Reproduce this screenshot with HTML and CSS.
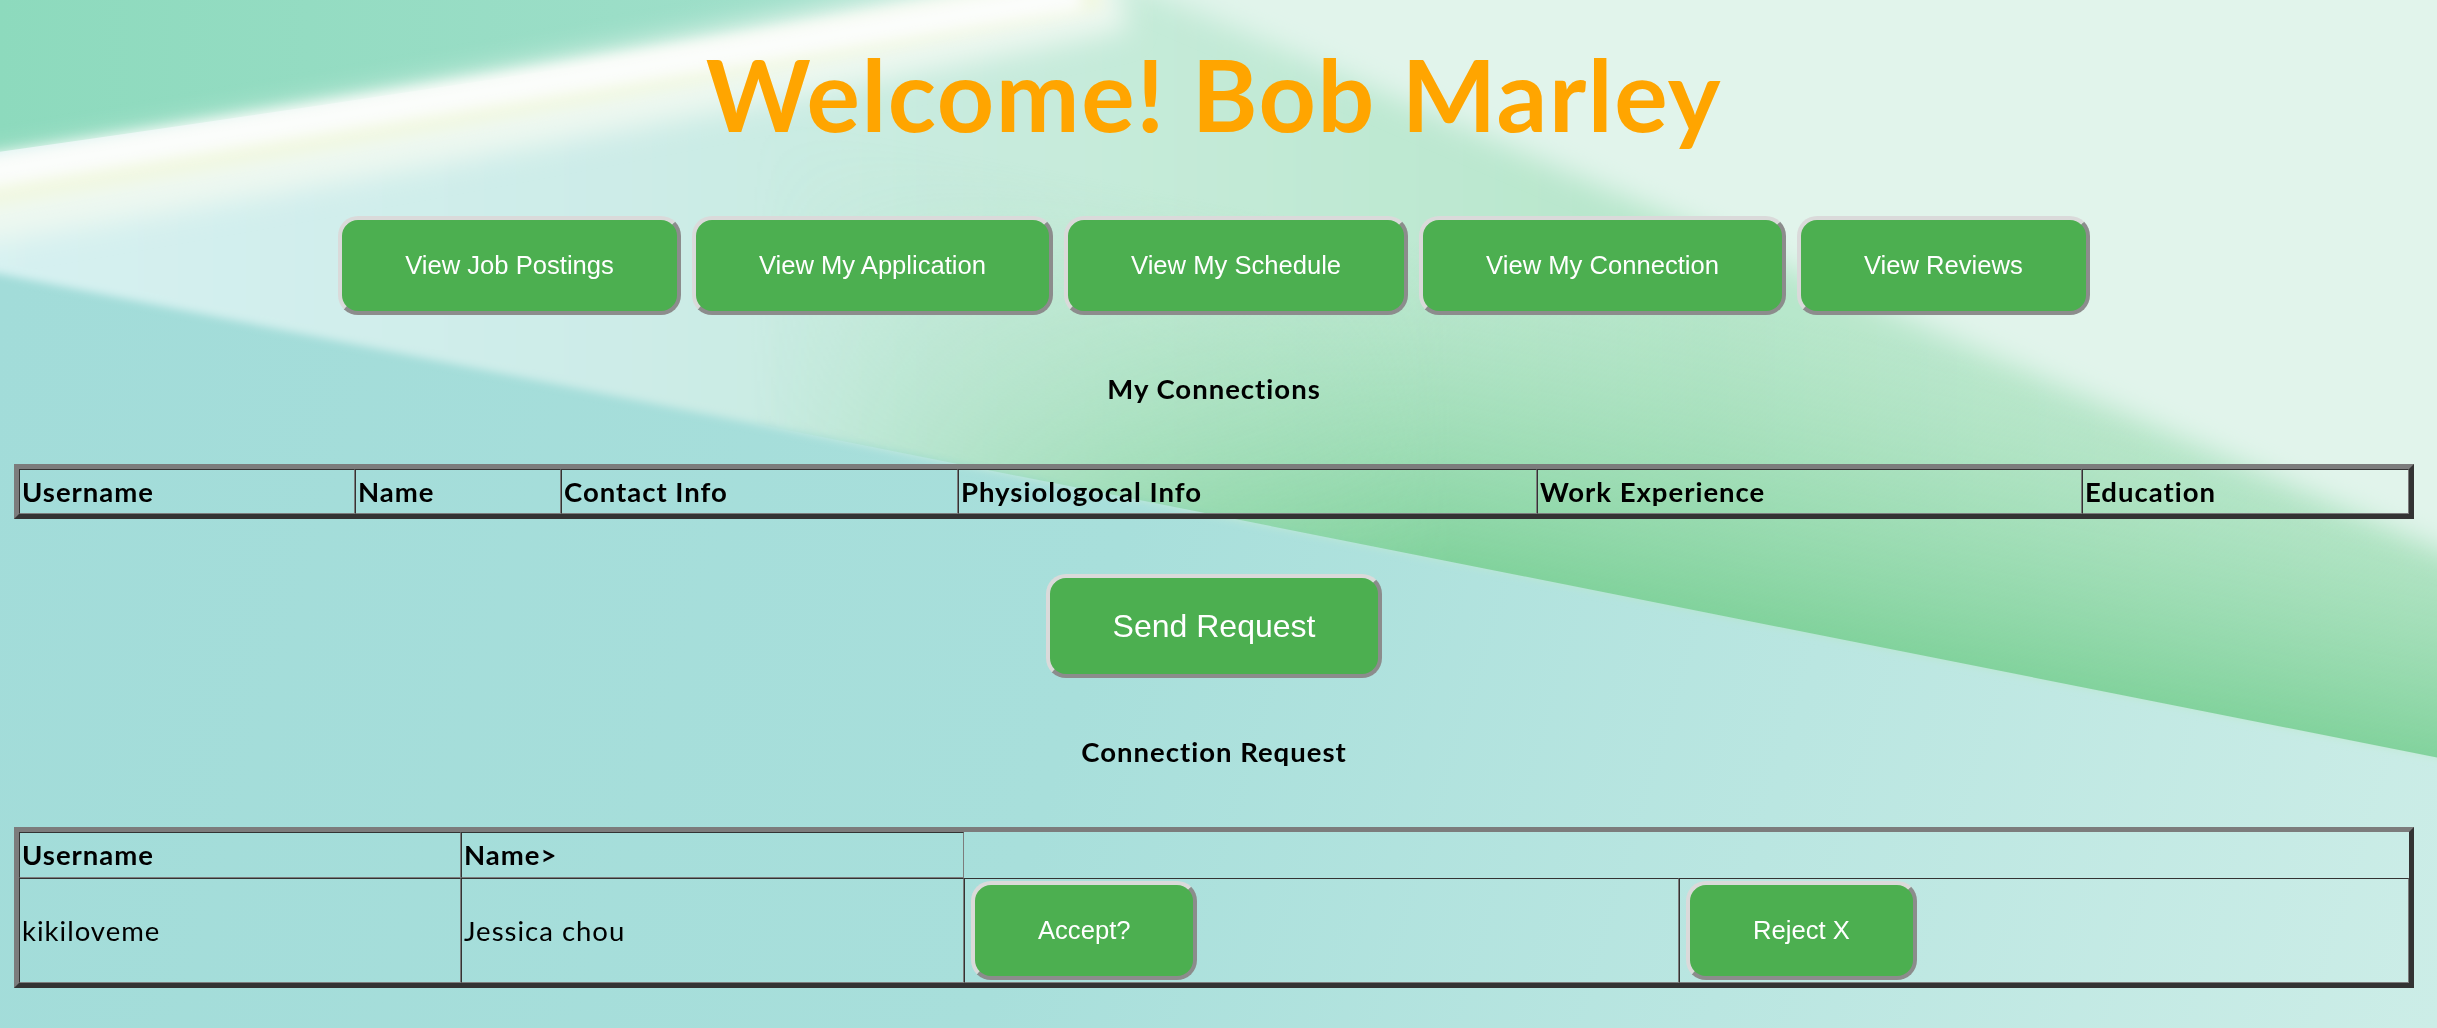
FILE: index.html
```html
<!DOCTYPE html>
<html lang="en">
<head>
<meta charset="utf-8">
<title>Welcome</title>
<link rel="stylesheet" href="styles.css">
</head>
<body>
<svg class="backdrop" viewBox="0 0 2437 1028" preserveAspectRatio="none" aria-hidden="true">
  <defs>
    <linearGradient id="gTeal" x1="0" y1="300" x2="2437" y2="1028" gradientUnits="userSpaceOnUse">
      <stop offset="0" stop-color="#a2dcd9"/>
      <stop offset="0.45" stop-color="#a8dfdb"/>
      <stop offset="1" stop-color="#ccede7"/>
    </linearGradient>
    <linearGradient id="gBand" x1="0" y1="0" x2="2437" y2="0" gradientUnits="userSpaceOnUse">
      <stop offset="0" stop-color="#d6f1f1"/>
      <stop offset="0.25" stop-color="#cdece8"/>
      <stop offset="0.45" stop-color="#c6ebda"/>
      <stop offset="0.7" stop-color="#b6e6ca"/>
      <stop offset="1" stop-color="#c2ead2"/>
    </linearGradient>
    <linearGradient id="gEdge" x1="1800" y1="630" x2="1860" y2="330" gradientUnits="userSpaceOnUse">
      <stop offset="0" stop-color="#7fd19a" stop-opacity="0.95"/>
      <stop offset="0.5" stop-color="#8fd7a8" stop-opacity="0.5"/>
      <stop offset="1" stop-color="#9fdcb4" stop-opacity="0"/>
    </linearGradient>
    <linearGradient id="gEdgeFade" x1="750" y1="0" x2="1450" y2="0" gradientUnits="userSpaceOnUse">
      <stop offset="0" stop-color="#fff" stop-opacity="0"/>
      <stop offset="1" stop-color="#fff" stop-opacity="1"/>
    </linearGradient>
    <mask id="mEdge">
      <rect x="0" y="0" width="2437" height="1028" fill="url(#gEdgeFade)"/>
    </mask>
    <linearGradient id="gMint" x1="0" y1="0" x2="1100" y2="0" gradientUnits="userSpaceOnUse">
      <stop offset="0" stop-color="#8ddabd"/>
      <stop offset="1" stop-color="#a6e1cf"/>
    </linearGradient>
    <filter id="soft" x="-5%" y="-5%" width="110%" height="110%"><feGaussianBlur stdDeviation="4"/></filter>
    <filter id="mid" x="-5%" y="-20%" width="110%" height="140%"><feGaussianBlur stdDeviation="7"/></filter>
    <filter id="softer" x="-10%" y="-50%" width="120%" height="200%"><feGaussianBlur stdDeviation="14"/></filter>
  </defs>
  <rect x="0" y="0" width="2437" height="1028" fill="url(#gTeal)"/>
  <polygon points="-60,-100 2500,-100 2500,770 -60,262" fill="url(#gBand)" filter="url(#soft)"/>
  <polygon points="-60,-100 2500,-100 2500,770 -60,262" fill="url(#gEdge)" mask="url(#mEdge)"/>
  <polygon points="1030,-60 2500,-60 2500,575" fill="#e1f4eb" filter="url(#softer)"/>
  <path d="M-60,-60 L1080,-60 L1040,0 C700,45 340,105 -60,160 Z" fill="url(#gMint)"/>
  <path d="M-60,210 C300,150 660,85 1120,-10" stroke="#eef8f0" stroke-width="80" fill="none" filter="url(#softer)"/>
  <path d="M-60,198 C300,140 660,74 1100,-8" stroke="#f1f8e2" stroke-width="34" fill="none" filter="url(#mid)"/>
  <path d="M-60,180 C300,124 660,60 1080,-5" stroke="#fbfdfb" stroke-width="30" fill="none" filter="url(#mid)"/>
</svg>

<main class="page">
  <h1 class="title">Welcome! Bob Marley</h1>

  <nav class="nav">
    <button class="btn">View Job Postings</button>
    <button class="btn">View My Application</button>
    <button class="btn">View My Schedule</button>
    <button class="btn">View My Connection</button>
    <button class="btn">View Reviews</button>
  </nav>

  <h4 class="section-title">My Connections</h4>

  <table class="grid connections">
    <colgroup>
      <col class="c-user"><col class="c-name"><col class="c-contact"><col class="c-phys"><col class="c-work"><col class="c-edu">
    </colgroup>
    <tr>
      <th>Username</th>
      <th>Name</th>
      <th>Contact Info</th>
      <th>Physiologocal Info</th>
      <th>Work Experience</th>
      <th>Education</th>
    </tr>
  </table>

  <button class="btn btn-large">Send Request</button>

  <h4 class="section-title">Connection Request</h4>

  <table class="grid requests">
    <colgroup>
      <col class="r-user"><col class="r-name"><col class="r-accept"><col class="r-reject">
    </colgroup>
    <tr>
      <th>Username</th>
      <th>Name&gt;</th>
    </tr>
    <tr>
      <td>kikiloveme</td>
      <td>Jessica chou</td>
      <td class="action"><button class="btn btn-cell">Accept?</button></td>
      <td class="action"><button class="btn btn-cell">Reject X</button></td>
    </tr>
  </table>
</main>
</body>
</html>
```

FILE: styles.css
```css
html, body {
  margin: 0;
  padding: 0;
}

body {
  font-family: Lato, "Open Sans", "Noto Sans", sans-serif;
  color: #000;
  min-height: 1028px;
}

.backdrop {
  position: fixed;
  top: 0;
  left: 0;
  width: 100%;
  height: 100%;
  z-index: -1;
  display: block;
}

.page {
  margin-left: 14px;
  width: 2400px;
  display: flex;
  flex-direction: column;
  align-items: center;
}

.title {
  margin: 33px 0 0;
  font-size: 100px;
  line-height: 120px;
  letter-spacing: 1.6px;
  font-weight: 700;
  color: #ffa500;
}

.nav {
  display: flex;
  gap: 11px;
  margin-top: 63px;
}

.btn {
  font-family: "Liberation Sans", Arial, sans-serif;
  font-size: 25.6px;
  line-height: 29px;
  color: #fff;
  background: #4caf50;
  border: 4px solid;
  border-color: #dadada #8c8c8c #8c8c8c #dadada;
  border-radius: 20px;
  padding: 31px 63px;
  margin: 0;
  white-space: nowrap;
  cursor: pointer;
}

.btn-large {
  font-size: 32px;
  line-height: 36px;
  padding: 30px 63px;
  margin-top: 55px;
}

.btn-cell {
  display: block;
  margin: 0 4px;
}

.section-title {
  margin: 58px 0 0;
  font-size: 27.5px;
  line-height: 32px;
  letter-spacing: 1px;
  font-weight: 700;
}

.grid {
  align-self: stretch;
  width: 2400px;
  margin-top: 59px;
  table-layout: fixed;
  border-collapse: separate;
  border-spacing: 0;
  border: 5px solid;
  border-color: #7c7c7c #333 #333 #7c7c7c;
}

.grid th,
.grid td {
  box-sizing: border-box;
  border: 1px solid;
  border-color: #333 #7c7c7c #7c7c7c #333;
  padding: 1px 2px;
  text-align: left;
  vertical-align: middle;
  font-size: 27.5px;
  letter-spacing: 1px;
}

.grid th {
  font-weight: 700;
}

.connections th {
  line-height: 41px;
}

.requests th {
  line-height: 42px;
}

.grid td.action {
  padding: 2px 2px;
  letter-spacing: normal;
}

.c-user { width: 336px; }
.c-name { width: 206px; }
.c-contact { width: 397px; }
.c-phys { width: 579px; }
.c-work { width: 545px; }
.c-edu { width: 327px; }

.r-user { width: 442px; }
.r-name { width: 503px; }
.r-accept { width: 715px; }
.r-reject { width: 730px; }
```
